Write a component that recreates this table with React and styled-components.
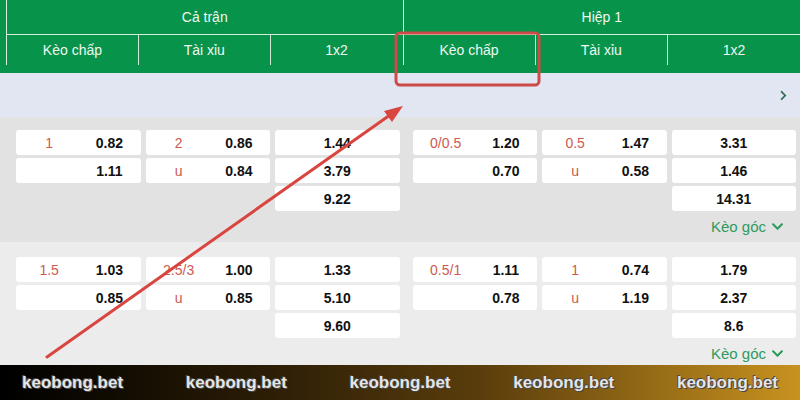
import React from "react";
import styled, { createGlobalStyle } from "styled-components";
import { FaChevronDown, FaChevronRight } from "react-icons/fa";

const GlobalStyle = createGlobalStyle`
    body {
        margin: 0;
        background: #ebebeb;
        font-family: "Liberation Sans", Arial, sans-serif;
    }
`;

const Page = styled.div`
    position: relative;
    width: 800px;
    height: 400px;
    overflow: hidden;
`;

const Header = styled.div`
    background: #08934b;
    padding: 0 0 8px 6px;
`;

const HeaderTable = styled.div`
    display: grid;
    grid-template-columns: 1fr 1fr;
    border-left: 1px solid #d8efe0;
`;

const HeaderGroup = styled.div`
    border-right: ${(p) => (p.$last ? "none" : "1px solid #d8efe0")};
`;

const GroupTitle = styled.div`
    height: 34px;
    line-height: 34px;
    text-align: center;
    color: #eef8f1;
    font-size: 14px;
    border-bottom: 1px solid #d8efe0;
`;

const SubRow = styled.div`
    display: grid;
    grid-template-columns: repeat(3, 1fr);
`;

const SubCell = styled.div`
    height: 30px;
    line-height: 30px;
    text-align: center;
    color: #eef8f1;
    font-size: 14px;
    border-right: ${(p) => (p.$last ? "none" : "1px solid #cfe9d8")};
`;

const InfoBand = styled.div`
    height: 44px;
    background: #e1e6f2;
    display: flex;
    align-items: center;
    justify-content: flex-end;
    padding-right: 11px;
    color: #2f6f50;
    font-size: 11px;
`;

const Section = styled.div`
    background: ${(p) => p.$bg};
    padding: ${(p) => p.$pad};
`;

const Groups = styled.div`
    display: grid;
    grid-template-columns: 1fr 1fr;
    gap: 13px;
`;

const Group = styled.div`
    display: grid;
    grid-template-columns: repeat(3, 1fr);
    gap: 5px;
    align-items: start;
`;

const Column = styled.div`
    display: flex;
    flex-direction: column;
    gap: 3px;
`;

const Cell = styled.div`
    height: 25px;
    background: #fff;
    border-radius: 3px;
    display: grid;
    grid-template-columns: ${(p) => (p.$split ? "1fr 1fr" : "1fr")};
    align-items: center;
    font-size: 14px;
`;

const Label = styled.span`
    text-align: center;
    padding-left: 4px;
    color: #cc5a4f;
`;

const Value = styled.span`
    text-align: center;
    color: #111;
    font-weight: bold;
`;

const CornerLink = styled.div`
    margin-top: 6px;
    height: 18px;
    display: flex;
    align-items: center;
    justify-content: flex-end;
    gap: 5px;
    padding-right: 12px;
    color: #2d9a5e;
    font-size: 15px;
`;

const Footer = styled.div`
    height: 35px;
    background: linear-gradient(90deg, #000 0%, #120c02 15%, #2e1f06 35%, #5a3d0c 60%, #c8921f 100%);
    display: flex;
    align-items: center;
    justify-content: space-between;
    padding: 0 22px;
`;

const Brand = styled.span`
    font-weight: bold;
    font-size: 17px;
    color: #e6e6e6;
    text-shadow: 0 0 1px #3a3a3a, 1px 1px 0 #4a4a4a, -1px -1px 0 #4a4a4a;
`;

const Overlay = styled.svg`
    position: absolute;
    left: 0;
    top: 0;
    pointer-events: none;
`;

const matches = [
    {
        bg: "#e2e2e2",
        pad: "13px 4px 7px 16px",
        groups: [
            { hdp: ["1", "0.82", "", "1.11"], ou: ["2", "0.86", "u", "0.84"], x12: ["1.44", "3.79", "9.22"] },
            { hdp: ["0/0.5", "1.20", "", "0.70"], ou: ["0.5", "1.47", "u", "0.58"], x12: ["3.31", "1.46", "14.31"] },
        ],
    },
    {
        bg: "#ececec",
        pad: "15px 4px 3px 16px",
        groups: [
            { hdp: ["1.5", "1.03", "", "0.85"], ou: ["2.5/3", "1.00", "u", "0.85"], x12: ["1.33", "5.10", "9.60"] },
            { hdp: ["0.5/1", "1.11", "", "0.78"], ou: ["1", "0.74", "u", "1.19"], x12: ["1.79", "2.37", "8.6"] },
        ],
    },
];

const SplitColumn = ({ data }) => (
    <Column>
        <Cell $split>
            <Label>{data[0]}</Label>
            <Value>{data[1]}</Value>
        </Cell>
        <Cell $split>
            <Label>{data[2]}</Label>
            <Value>{data[3]}</Value>
        </Cell>
    </Column>
);

const HeaderBlock = ({ title, last }) => (
    <HeaderGroup $last={last}>
        <GroupTitle>{title}</GroupTitle>
        <SubRow>
            <SubCell>Kèo chấp</SubCell>
            <SubCell>Tài xỉu</SubCell>
            <SubCell $last>1x2</SubCell>
        </SubRow>
    </HeaderGroup>
);

export default function App() {
    return (
        <Page>
            <GlobalStyle />
            <Header>
                <HeaderTable>
                    <HeaderBlock title="Cả trận" />
                    <HeaderBlock title="Hiệp 1" last />
                </HeaderTable>
            </Header>
            <InfoBand>
                <FaChevronRight />
            </InfoBand>
            {matches.map((m, i) => (
                <Section key={i} $bg={m.bg} $pad={m.pad}>
                    <Groups>
                        {m.groups.map((g, j) => (
                            <Group key={j}>
                                <SplitColumn data={g.hdp} />
                                <SplitColumn data={g.ou} />
                                <Column>
                                    {g.x12.map((v) => (
                                        <Cell key={v}>
                                            <Value>{v}</Value>
                                        </Cell>
                                    ))}
                                </Column>
                            </Group>
                        ))}
                    </Groups>
                    <CornerLink>
                        Kèo góc <FaChevronDown size={13} />
                    </CornerLink>
                </Section>
            ))}
            <Footer>
                {[0, 1, 2, 3, 4].map((k) => (
                    <Brand key={k}>keobong.bet</Brand>
                ))}
            </Footer>
            <Overlay width="800" height="400" viewBox="0 0 800 400">
                <rect x="396" y="33" width="143" height="52" rx="4" fill="none" stroke="#cc4a47" strokeWidth="3" />
                <line x1="47" y1="357" x2="390" y2="115" stroke="#d9463f" strokeWidth="3" strokeLinecap="round" />
                <polygon points="403,106 392,122 384,111" fill="#d9463f" />
            </Overlay>
        </Page>
    );
}
